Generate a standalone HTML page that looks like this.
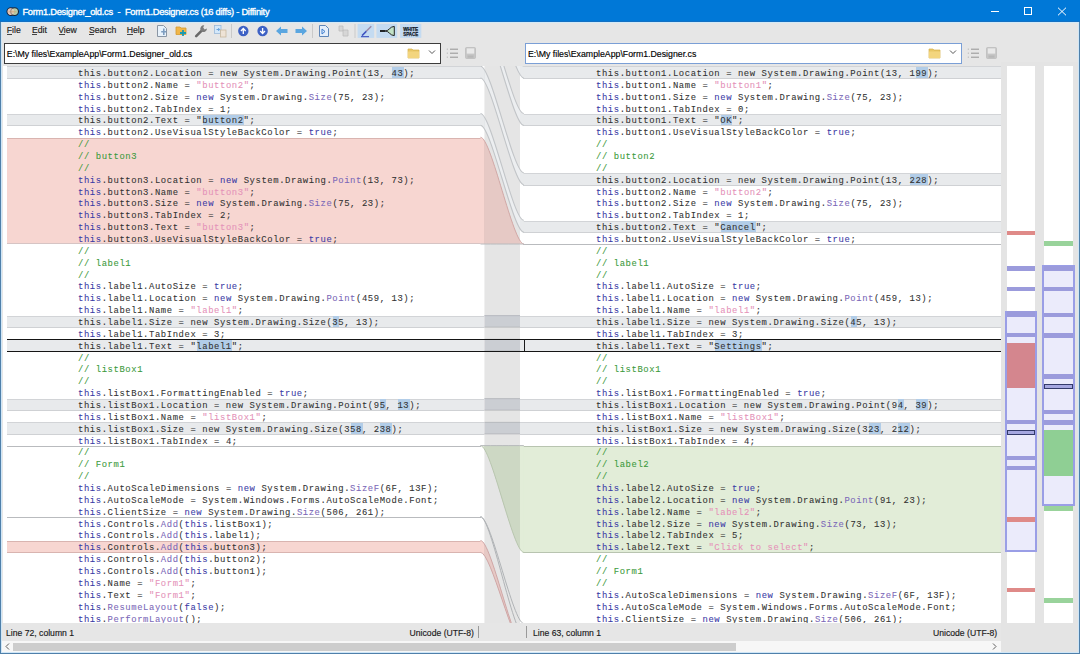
<!DOCTYPE html><html><head><meta charset="utf-8"><style>
*{margin:0;padding:0;box-sizing:border-box}
html,body{width:1080px;height:654px;overflow:hidden;background:#e6e6e6}
body{position:relative;font-family:"Liberation Sans",sans-serif}
.a{position:absolute}
.ln{position:absolute;font-family:"Liberation Mono",monospace;font-size:8.90px;line-height:11.86px;white-space:pre;color:#333333;letter-spacing:0.589px;-webkit-text-stroke:0.08px currentColor}
.band{position:absolute;background:#e8eaec;border-top:1px solid #d2d4d7;border-bottom:1px solid #cfd1d4}
.hl{position:absolute;background:#b2cde8}
.ui{position:absolute;font-family:"Liberation Sans",sans-serif;white-space:pre;-webkit-text-stroke:0.15px currentColor}
</style></head><body><div class="a" style="left:0;top:0;width:1080px;height:22.3px;background:#0078d7"></div><div class="a" style="left:0;top:21.4px;width:1080px;height:1px;background:#1570c2"></div><div class="a" style="left:0;top:22.4px;width:1080px;height:0.9px;background:#d2eaf8"></div><svg class="a" style="left:0;top:0" width="24" height="22" viewBox="0 0 24 22"><circle cx="10.9" cy="11.6" r="3.9" fill="#e6c2b4" stroke="#10223c" stroke-width="1.1"/><circle cx="14.6" cy="11.6" r="3.9" fill="#c9d6a6" fill-opacity="0.9" stroke="#10223c" stroke-width="1.1"/><circle cx="10.9" cy="11.6" r="3.4" fill="#e8c4b6" fill-opacity="0.6"/><path d="M8.5 11.8 h8" stroke="#c9a070" stroke-width="0.7"/></svg><div class="ui" style="left:22.40px;top:6.55px;font-size:9.30px;line-height:11.16px;color:#ffffff;letter-spacing:-0.27px;-webkit-text-stroke:0.35px #ffffff">Form1.Designer_old.cs  -  Form1.Designer.cs (16 diffs) - Diffinity</div><div class="a" style="left:990.5px;top:10.8px;width:8px;height:1px;background:#fff"></div><div class="a" style="left:1024px;top:7.3px;width:8px;height:7.4px;border:1px solid #fff"></div><svg class="a" style="left:1057px;top:6.5px" width="10" height="9" viewBox="0 0 10 9"><path d="M1 0.7 L9 8.3 M9 0.7 L1 8.3" stroke="#fff" stroke-width="1"/></svg><div class="ui" style="left:6.80px;top:24.80px;font-size:8.70px;line-height:10.44px;color:#202020;">File</div><div class="ui" style="left:31.90px;top:24.80px;font-size:8.70px;line-height:10.44px;color:#202020;">Edit</div><div class="ui" style="left:58.20px;top:24.80px;font-size:8.70px;line-height:10.44px;color:#202020;">View</div><div class="ui" style="left:88.90px;top:24.80px;font-size:8.70px;line-height:10.44px;color:#202020;">Search</div><div class="ui" style="left:126.70px;top:24.80px;font-size:8.70px;line-height:10.44px;color:#202020;">Help</div><div class="a" style="left:7px;top:34px;width:5px;height:0.8px;background:#444"></div><div class="a" style="left:32px;top:34px;width:5px;height:0.8px;background:#444"></div><div class="a" style="left:58.5px;top:34px;width:6px;height:0.8px;background:#444"></div><div class="a" style="left:89px;top:34px;width:5px;height:0.8px;background:#444"></div><div class="a" style="left:127px;top:34px;width:6px;height:0.8px;background:#444"></div><svg class="a" style="left:0;top:22px" width="440" height="20" viewBox="0 22 440 20"><path d="M157.5 25.5 h6 l3 3 v8 h-9 z" fill="#e8f2fb" stroke="#8a96a4" stroke-width="1"/><path d="M163.8 28.5 v6.5 M161.2 31.8 h5" fill="none" stroke="#7d9dc0" stroke-width="1.6"/><path d="M176 27 h4 l1 1 h5 v6.5 h-10 z" fill="#f0b64a" stroke="#d49a30" stroke-width="0.8"/><path d="M180 33 h6 M183 30 v6" stroke="#1a9ab0" stroke-width="1.8"/><path d="M196.2 36.2 L202.2 30.2" stroke="#6a6a6a" stroke-width="2.6" stroke-linecap="round"/><path d="M200.6 30.4 A3.6 3.6 0 0 1 204.3 25.3 L203.2 27.6 L204.6 29.4 L207 28.6 A3.6 3.6 0 0 1 202 31.8 Z" fill="#7c7c7c"/><rect x="214.5" y="25.5" width="6.5" height="8" fill="#d4e8fa" stroke="#9ab8da" stroke-width="0.8"/><path d="M216.5 29.5 h3 M218.2 28 l1.5 1.5 -1.5 1.5" fill="none" stroke="#5b9ad8" stroke-width="0.9"/><rect x="220.5" y="30" width="5.5" height="7" fill="#eee3d6" stroke="#c8b8a0" stroke-width="0.8"/><rect x="231" y="24" width="1" height="14" fill="#c9c9c9"/><rect x="312" y="24" width="1" height="14" fill="#c9c9c9"/><rect x="354.5" y="24" width="1" height="14" fill="#c9c9c9"/><circle cx="243.3" cy="31" r="5.2" fill="#3d61c4"/><path d="M243.3 34 v-5.2 M240.9 31 l2.4 -2.5 2.4 2.5" fill="none" stroke="#fff" stroke-width="1.3"/><circle cx="262.6" cy="31" r="5.2" fill="#3d61c4"/><path d="M262.6 28 v5.2 M260.2 31 l2.4 2.5 2.4 -2.5" fill="none" stroke="#fff" stroke-width="1.3"/><path d="M276 31 l5 -4.5 v2.5 h6.5 v4 h-6.5 v2.5 z" fill="#5aa6e0"/><path d="M307 31 l-5 -4.5 v2.5 h-6.5 v4 h6.5 v2.5 z" fill="#5aa6e0"/><path d="M319.5 25.5 h6 l3 3 v8 h-9 z" fill="#e4eefa" stroke="#5e86b8" stroke-width="1"/><path d="M322 29 v5 M322 29 l3 2.5 l-3 2.5" fill="none" stroke="#3f7fd0" stroke-width="1"/><path d="M339 26 h4 v5 h-4 z M343 30 h5 v6 h-5 z" fill="#d6d6d6" stroke="#bdbdbd" stroke-width="0.8"/><rect x="357.6" y="23.9" width="16.6" height="14" fill="#c4dbf1"/><rect x="376.4" y="23.9" width="20.8" height="14" fill="#c4dbf1"/><rect x="400.1" y="23.9" width="21.2" height="14" fill="#c4dbf1"/><path d="M362 35.6 L366.5 31.1" stroke="#3d52c0" stroke-width="1.5"/><path d="M366.3 31.3 L371.3 26.3" stroke="#9a8aa8" stroke-width="1.5"/><path d="M361 36.7 h8" stroke="#3344b8" stroke-width="1"/><path d="M385.5 31 C389 31 390 26.4 394.3 26.4 L394.3 35.6 C390 35.6 389 31 385.5 31 Z" fill="#c2e2c6" stroke="#222" stroke-width="1"/><path d="M380 31 h5.5" stroke="#111" stroke-width="1.8"/><text x="403.2" y="30.6" font-family="Liberation Sans" font-weight="bold" font-size="5.2" textLength="15" lengthAdjust="spacingAndGlyphs" fill="#101828" stroke="#101828" stroke-width="0.25">WHITE</text><text x="403.2" y="35.8" font-family="Liberation Sans" font-weight="bold" font-size="5.2" textLength="15" lengthAdjust="spacingAndGlyphs" fill="#101828" stroke="#101828" stroke-width="0.25">SPACE</text></svg><div class="a" style="left:3.80px;top:43px;width:436.90px;height:20.6px;background:#fff;border:1px solid #3c3c3c"></div><div class="ui" style="left:6.80px;top:49.06px;font-size:8.75px;line-height:10.50px;color:#000;">E:\My files\ExampleApp\Form1.Designer_old.cs</div><svg class="a" style="left:406.70px;top:47px" width="14" height="12" viewBox="0 0 14 12"><path d="M1 2 h4 l1 1 h6 v8 h-11 z" fill="#e9c766" stroke="#d7b24c" stroke-width="0.7"/><rect x="1" y="4.5" width="11" height="6.5" fill="#f3d57e"/></svg><svg class="a" style="left:427.70px;top:49px" width="8" height="6" viewBox="0 0 8 6"><path d="M1 1.5 L4 4.5 L7 1.5" fill="none" stroke="#444" stroke-width="0.9"/></svg><svg class="a" style="left:445.70px;top:47px" width="13" height="12" viewBox="0 0 13 12"><path d="M4 2.2 h8 M4 6.2 h8 M4 10.2 h8" stroke="#8a8a8a" stroke-width="0.9"/><path d="M1.3 1.5 v1.4 M1.3 5.5 v1.4 M1.3 9.5 v1.4" stroke="#b0b0b0" stroke-width="0.8"/></svg><svg class="a" style="left:465.20px;top:47px" width="11" height="12" viewBox="0 0 11 12"><rect x="0.5" y="0.5" width="10" height="11" rx="1" fill="#c6c6c6" stroke="#bdbdbd" stroke-width="0.8"/><rect x="1.8" y="1.4" width="7.4" height="5.2" fill="#e9e9e9"/><rect x="2.5" y="8.5" width="6" height="2.2" fill="#b8b8b8"/></svg><div class="a" style="left:525.00px;top:43px;width:436.60px;height:20.6px;background:#fff;border:1px solid #7a9fd6"></div><div class="ui" style="left:528.00px;top:49.06px;font-size:8.75px;line-height:10.50px;color:#000;">E:\My files\ExampleApp\Form1.Designer.cs</div><svg class="a" style="left:927.60px;top:47px" width="14" height="12" viewBox="0 0 14 12"><path d="M1 2 h4 l1 1 h6 v8 h-11 z" fill="#e9c766" stroke="#d7b24c" stroke-width="0.7"/><rect x="1" y="4.5" width="11" height="6.5" fill="#f3d57e"/></svg><svg class="a" style="left:948.60px;top:49px" width="8" height="6" viewBox="0 0 8 6"><path d="M1 1.5 L4 4.5 L7 1.5" fill="none" stroke="#444" stroke-width="0.9"/></svg><svg class="a" style="left:966.60px;top:47px" width="13" height="12" viewBox="0 0 13 12"><path d="M4 2.2 h8 M4 6.2 h8 M4 10.2 h8" stroke="#8a8a8a" stroke-width="0.9"/><path d="M1.3 1.5 v1.4 M1.3 5.5 v1.4 M1.3 9.5 v1.4" stroke="#b0b0b0" stroke-width="0.8"/></svg><svg class="a" style="left:986.10px;top:47px" width="11" height="12" viewBox="0 0 11 12"><rect x="0.5" y="0.5" width="10" height="11" rx="1" fill="#c6c6c6" stroke="#bdbdbd" stroke-width="0.8"/><rect x="1.8" y="1.4" width="7.4" height="5.2" fill="#e9e9e9"/><rect x="2.5" y="8.5" width="6" height="2.2" fill="#b8b8b8"/></svg><div class="a" style="left:0;top:66.40px;width:1080px;height:556.90px;overflow:hidden"><div class="a" style="left:3.00px;top:0;width:998.00px;height:100%;background:#fff"></div><div class="a" style="left:7.00px;top:71.26px;width:474.00px;height:106.74px;background:#f7d6d1;border-top:1px solid #d9b4b0;border-bottom:1px solid #d6c4c4"></div><div class="a" style="left:7.00px;top:474.50px;width:474.00px;height:11.86px;background:#f7d6d1;border-top:1px solid #d9b4b0;border-bottom:1px solid #d9b4b0"></div><div class="a" style="left:523.30px;top:379.62px;width:477.70px;height:106.74px;background:#e2edd8;border-top:1px solid #b8c4b0;border-bottom:1px solid #b8c4b0"></div><div class="a" style="left:7.00px;top:379.12px;width:474.00px;height:1.00px;background:#b9bbbe"></div><div class="a" style="left:7.00px;top:450.28px;width:474.00px;height:1.00px;background:#b9bbbe"></div><div class="a" style="left:523.30px;top:177.50px;width:477.70px;height:1.00px;background:#b9bbbe"></div><div class="band" style="left:7.00px;top:0.10px;width:474.00px;height:12.46px"></div><div class="band" style="left:7.00px;top:47.54px;width:474.00px;height:12.46px"></div><div class="band" style="left:7.00px;top:249.16px;width:513.00px;height:12.46px"></div><div class="band" style="left:7.00px;top:272.88px;width:513.00px;height:12.46px"></div><div class="band" style="left:7.00px;top:332.18px;width:513.00px;height:12.46px"></div><div class="band" style="left:7.00px;top:355.90px;width:513.00px;height:12.46px"></div><div class="band" style="left:523.30px;top:0.10px;width:477.70px;height:12.46px"></div><div class="band" style="left:523.30px;top:47.54px;width:477.70px;height:12.46px"></div><div class="band" style="left:523.30px;top:106.84px;width:477.70px;height:12.46px"></div><div class="band" style="left:523.30px;top:154.28px;width:477.70px;height:12.46px"></div><div class="band" style="left:484.40px;top:249.16px;width:516.60px;height:12.46px"></div><div class="band" style="left:484.40px;top:272.88px;width:516.60px;height:12.46px"></div><div class="band" style="left:484.40px;top:332.18px;width:516.60px;height:12.46px"></div><div class="band" style="left:484.40px;top:355.90px;width:516.60px;height:12.46px"></div><svg class="a" style="left:0;top:0" width="1080" height="557" viewBox="0 66.40 1080 557"><rect x="484.40" y="0" width="35.60" height="700" fill="#ffffff"/><clipPath id="strip"><rect x="484.40" y="0" width="35.60" height="700"/></clipPath><rect x="484.40" y="315.56" width="35.60" height="11.86" fill="#e8eaec"/><rect x="484.40" y="315.56" width="35.60" height="1" fill="#d2d4d7"/><rect x="484.40" y="327.02" width="35.60" height="1" fill="#cfd1d4"/><rect x="484.40" y="339.28" width="35.60" height="11.86" fill="#e8eaec"/><rect x="484.40" y="339.28" width="35.60" height="1" fill="#d2d4d7"/><rect x="484.40" y="350.74" width="35.60" height="1" fill="#cfd1d4"/><rect x="484.40" y="398.58" width="35.60" height="11.86" fill="#e8eaec"/><rect x="484.40" y="398.58" width="35.60" height="1" fill="#d2d4d7"/><rect x="484.40" y="410.04" width="35.60" height="1" fill="#cfd1d4"/><rect x="484.40" y="422.30" width="35.60" height="11.86" fill="#e8eaec"/><rect x="484.40" y="422.30" width="35.60" height="1" fill="#d2d4d7"/><rect x="484.40" y="433.76" width="35.60" height="1" fill="#cfd1d4"/><path d="M480.50,-40.24 C491.32,-40.24 512.97,66.50 523.80,66.50 L523.80,78.36 C512.97,78.36 491.32,-28.38 480.50,-28.38 Z" fill="#e8eaec" stroke="none"/><path d="M480.50,7.20 C491.32,7.20 512.97,113.94 523.80,113.94 L523.80,125.80 C512.97,125.80 491.32,19.06 480.50,19.06 Z" fill="#e8eaec" stroke="none"/><path d="M480.50,66.50 C491.32,66.50 512.97,173.24 523.80,173.24 L523.80,185.10 C512.97,185.10 491.32,78.36 480.50,78.36 Z" fill="#e8eaec" stroke="none"/><path d="M480.50,113.94 C491.32,113.94 512.97,220.68 523.80,220.68 L523.80,232.54 C512.97,232.54 491.32,125.80 480.50,125.80 Z" fill="#e8eaec" stroke="none"/><path d="M480.50,137.66 C491.32,137.66 512.97,244.40 523.80,244.40 L523.80,244.40 C512.97,244.40 491.32,244.40 480.50,244.40 Z" fill="#f7d6d1" stroke="none"/><path d="M480.50,540.90 C491.32,540.90 512.97,647.64 523.80,647.64 L523.80,647.64 C512.97,647.64 491.32,552.76 480.50,552.76 Z" fill="#f7d6d1" stroke="none"/><path d="M480.50,446.02 C491.32,446.02 512.97,446.02 523.80,446.02 L523.80,552.76 C512.97,552.76 491.32,446.02 480.50,446.02 Z" fill="#e2edd8" stroke="none"/><rect x="484.40" y="0" width="35.60" height="700" fill="#000" fill-opacity="0.1"/><rect x="484.40" y="315.56" width="35.60" height="11.86" fill="#4060b0" fill-opacity="0.03"/><rect x="484.40" y="339.28" width="35.60" height="11.86" fill="#4060b0" fill-opacity="0.03"/><rect x="484.40" y="398.58" width="35.60" height="11.86" fill="#4060b0" fill-opacity="0.03"/><rect x="484.40" y="422.30" width="35.60" height="11.86" fill="#4060b0" fill-opacity="0.03"/><path d="M480.50,-40.24 C491.32,-40.24 512.97,66.50 523.80,66.50 L523.80,78.36 C512.97,78.36 491.32,-28.38 480.50,-28.38 Z" fill="#eceef0" stroke="none" clip-path="url(#strip)"/><path d="M480.50,7.20 C491.32,7.20 512.97,113.94 523.80,113.94 L523.80,125.80 C512.97,125.80 491.32,19.06 480.50,19.06 Z" fill="#eceef0" stroke="none" clip-path="url(#strip)"/><path d="M480.50,66.50 C491.32,66.50 512.97,173.24 523.80,173.24 L523.80,185.10 C512.97,185.10 491.32,78.36 480.50,78.36 Z" fill="#eceef0" stroke="none" clip-path="url(#strip)"/><path d="M480.50,113.94 C491.32,113.94 512.97,220.68 523.80,220.68 L523.80,232.54 C512.97,232.54 491.32,125.80 480.50,125.80 Z" fill="#eceef0" stroke="none" clip-path="url(#strip)"/><path d="M480.50,137.66 C491.32,137.66 512.97,244.40 523.80,244.40 L523.80,244.40 C512.97,244.40 491.32,244.40 480.50,244.40 Z" fill="#e6c9c5" stroke="none" clip-path="url(#strip)"/><path d="M480.50,540.90 C491.32,540.90 512.97,647.64 523.80,647.64 L523.80,647.64 C512.97,647.64 491.32,552.76 480.50,552.76 Z" fill="#e6c9c5" stroke="none" clip-path="url(#strip)"/><path d="M480.50,446.02 C491.32,446.02 512.97,446.02 523.80,446.02 L523.80,552.76 C512.97,552.76 491.32,446.02 480.50,446.02 Z" fill="#cdd8c4" stroke="none" clip-path="url(#strip)"/><path d="M480.50,-40.24 C491.32,-40.24 512.97,66.50 523.80,66.50" fill="none" stroke="#c2c5c8" stroke-width="1.1"/><path d="M480.50,-28.38 C491.32,-28.38 512.97,78.36 523.80,78.36" fill="none" stroke="#c2c5c8" stroke-width="1.1"/><path d="M480.50,7.20 C491.32,7.20 512.97,113.94 523.80,113.94" fill="none" stroke="#c2c5c8" stroke-width="1.1"/><path d="M480.50,19.06 C491.32,19.06 512.97,125.80 523.80,125.80" fill="none" stroke="#c2c5c8" stroke-width="1.1"/><path d="M480.50,66.50 C491.32,66.50 512.97,173.24 523.80,173.24" fill="none" stroke="#c2c5c8" stroke-width="1.1"/><path d="M480.50,78.36 C491.32,78.36 512.97,185.10 523.80,185.10" fill="none" stroke="#c2c5c8" stroke-width="1.1"/><path d="M480.50,113.94 C491.32,113.94 512.97,220.68 523.80,220.68" fill="none" stroke="#c2c5c8" stroke-width="1.1"/><path d="M480.50,125.80 C491.32,125.80 512.97,232.54 523.80,232.54" fill="none" stroke="#c2c5c8" stroke-width="1.1"/><path d="M480.50,137.66 C491.32,137.66 512.97,244.40 523.80,244.40 L523.80,244.40 C512.97,244.40 491.32,244.40 480.50,244.40 Z" fill="#e6c9c5" stroke="none" clip-path="url(#strip)"/><path d="M480.50,137.66 C491.32,137.66 512.97,244.40 523.80,244.40" fill="none" stroke="#d2aaa8" stroke-width="1"/><path d="M480.50,244.40 C491.32,244.40 512.97,244.40 523.80,244.40" fill="none" stroke="#b8babd" stroke-width="1"/><path d="M480.50,517.18 C491.32,517.18 512.97,623.92 523.80,623.92" fill="none" stroke="#b0b3b6" stroke-width="1"/><path d="M480.50,517.18 C491.32,517.18 512.97,635.78 523.80,635.78" fill="none" stroke="#b0b3b6" stroke-width="1"/><path d="M480.50,540.90 C491.32,540.90 512.97,647.64 523.80,647.64" fill="none" stroke="#d0a8a8" stroke-width="1"/><path d="M480.50,552.76 C491.32,552.76 512.97,647.64 523.80,647.64" fill="none" stroke="#d0a8a8" stroke-width="1"/><path d="M480.50,446.02 C491.32,446.02 512.97,552.76 523.80,552.76" fill="none" stroke="#b9c6b0" stroke-width="1"/><path d="M480.50,446.02 C491.32,446.02 512.97,446.02 523.80,446.02" fill="none" stroke="#b8babd" stroke-width="1"/></svg><div class="a" style="left:7px;top:272.28px;width:994.00px;height:1.6px;background:#151515"></div><div class="a" style="left:7px;top:284.14px;width:994.00px;height:1.6px;background:#151515"></div><div class="a" style="left:524.2px;top:272.88px;width:1.2px;height:11.86px;background:#1a1a1a"></div><div class="hl" style="left:392.29px;top:0.80px;width:11.86px;height:10.76px"></div><div class="ln" style="left:78.00px;top:2.55px">this.button2.Location = new System.Drawing.Point(13, 43);</div><div class="ln" style="left:78.00px;top:14.41px"><span style="color:#3b3ba6">this</span>.button2.Name = <span style="color:#e592b9">&quot;button2&quot;</span>;</div><div class="ln" style="left:78.00px;top:26.27px"><span style="color:#3b3ba6">this</span>.button2.Size = <span style="color:#3b3ba6">new</span> System.Drawing.<span style="color:#7b68b8">Size</span>(75, 23);</div><div class="ln" style="left:78.00px;top:38.13px"><span style="color:#3b3ba6">this</span>.button2.TabIndex = 1;</div><div class="hl" style="left:202.53px;top:48.24px;width:41.51px;height:10.76px"></div><div class="ln" style="left:78.00px;top:49.99px">this.button2.Text = &quot;button2&quot;;</div><div class="ln" style="left:78.00px;top:61.85px"><span style="color:#3b3ba6">this</span>.button2.UseVisualStyleBackColor = <span style="color:#3b3ba6">true</span>;</div><div class="ln" style="left:78.00px;top:73.71px"><span style="color:#3c9a3c">//</span></div><div class="ln" style="left:78.00px;top:85.57px"><span style="color:#3c9a3c">// button3</span></div><div class="ln" style="left:78.00px;top:97.43px"><span style="color:#3c9a3c">//</span></div><div class="ln" style="left:78.00px;top:109.29px"><span style="color:#3b3ba6">this</span>.button3.Location = <span style="color:#3b3ba6">new</span> System.Drawing.<span style="color:#7b68b8">Point</span>(13, 73);</div><div class="ln" style="left:78.00px;top:121.15px"><span style="color:#3b3ba6">this</span>.button3.Name = <span style="color:#e592b9">&quot;button3&quot;</span>;</div><div class="ln" style="left:78.00px;top:133.01px"><span style="color:#3b3ba6">this</span>.button3.Size = <span style="color:#3b3ba6">new</span> System.Drawing.<span style="color:#7b68b8">Size</span>(75, 23);</div><div class="ln" style="left:78.00px;top:144.87px"><span style="color:#3b3ba6">this</span>.button3.TabIndex = 2;</div><div class="ln" style="left:78.00px;top:156.73px"><span style="color:#3b3ba6">this</span>.button3.Text = <span style="color:#e592b9">&quot;button3&quot;</span>;</div><div class="ln" style="left:78.00px;top:168.59px"><span style="color:#3b3ba6">this</span>.button3.UseVisualStyleBackColor = <span style="color:#3b3ba6">true</span>;</div><div class="ln" style="left:78.00px;top:180.45px"><span style="color:#3c9a3c">//</span></div><div class="ln" style="left:78.00px;top:192.31px"><span style="color:#3c9a3c">// label1</span></div><div class="ln" style="left:78.00px;top:204.17px"><span style="color:#3c9a3c">//</span></div><div class="ln" style="left:78.00px;top:216.03px"><span style="color:#3b3ba6">this</span>.label1.AutoSize = <span style="color:#3b3ba6">true</span>;</div><div class="ln" style="left:78.00px;top:227.89px"><span style="color:#3b3ba6">this</span>.label1.Location = <span style="color:#3b3ba6">new</span> System.Drawing.<span style="color:#7b68b8">Point</span>(459, 13);</div><div class="ln" style="left:78.00px;top:239.75px"><span style="color:#3b3ba6">this</span>.label1.Name = <span style="color:#e592b9">&quot;label1&quot;</span>;</div><div class="hl" style="left:332.99px;top:249.86px;width:5.93px;height:10.76px"></div><div class="ln" style="left:78.00px;top:251.61px">this.label1.Size = new System.Drawing.Size(35, 13);</div><div class="ln" style="left:78.00px;top:263.47px"><span style="color:#3b3ba6">this</span>.label1.TabIndex = 3;</div><div class="hl" style="left:196.60px;top:273.58px;width:35.58px;height:10.76px"></div><div class="ln" style="left:78.00px;top:275.33px">this.label1.Text = &quot;label1&quot;;</div><div class="ln" style="left:78.00px;top:287.19px"><span style="color:#3c9a3c">//</span></div><div class="ln" style="left:78.00px;top:299.05px"><span style="color:#3c9a3c">// listBox1</span></div><div class="ln" style="left:78.00px;top:310.91px"><span style="color:#3c9a3c">//</span></div><div class="ln" style="left:78.00px;top:322.77px"><span style="color:#3b3ba6">this</span>.listBox1.FormattingEnabled = <span style="color:#3b3ba6">true</span>;</div><div class="hl" style="left:380.43px;top:332.88px;width:5.93px;height:10.76px"></div><div class="hl" style="left:398.22px;top:332.88px;width:11.86px;height:10.76px"></div><div class="ln" style="left:78.00px;top:334.63px">this.listBox1.Location = new System.Drawing.Point(95, 13);</div><div class="ln" style="left:78.00px;top:346.49px"><span style="color:#3b3ba6">this</span>.listBox1.Name = <span style="color:#e592b9">&quot;listBox1&quot;</span>;</div><div class="hl" style="left:350.78px;top:356.60px;width:11.86px;height:10.76px"></div><div class="hl" style="left:380.43px;top:356.60px;width:11.86px;height:10.76px"></div><div class="ln" style="left:78.00px;top:358.35px">this.listBox1.Size = new System.Drawing.Size(358, 238);</div><div class="ln" style="left:78.00px;top:370.21px"><span style="color:#3b3ba6">this</span>.listBox1.TabIndex = 4;</div><div class="ln" style="left:78.00px;top:382.07px"><span style="color:#3c9a3c">//</span></div><div class="ln" style="left:78.00px;top:393.93px"><span style="color:#3c9a3c">// Form1</span></div><div class="ln" style="left:78.00px;top:405.79px"><span style="color:#3c9a3c">//</span></div><div class="ln" style="left:78.00px;top:417.65px"><span style="color:#3b3ba6">this</span>.AutoScaleDimensions = <span style="color:#3b3ba6">new</span> System.Drawing.<span style="color:#7b68b8">SizeF</span>(6F, 13F);</div><div class="ln" style="left:78.00px;top:429.51px"><span style="color:#3b3ba6">this</span>.AutoScaleMode = System.Windows.Forms.AutoScaleMode.Font;</div><div class="ln" style="left:78.00px;top:441.37px"><span style="color:#3b3ba6">this</span>.ClientSize = <span style="color:#3b3ba6">new</span> System.Drawing.<span style="color:#7b68b8">Size</span>(506, 261);</div><div class="ln" style="left:78.00px;top:453.23px"><span style="color:#3b3ba6">this</span>.Controls.<span style="color:#7b68b8">Add</span>(<span style="color:#3b3ba6">this</span>.listBox1);</div><div class="ln" style="left:78.00px;top:465.09px"><span style="color:#3b3ba6">this</span>.Controls.<span style="color:#7b68b8">Add</span>(<span style="color:#3b3ba6">this</span>.label1);</div><div class="ln" style="left:78.00px;top:476.95px"><span style="color:#3b3ba6">this</span>.Controls.<span style="color:#7b68b8">Add</span>(<span style="color:#3b3ba6">this</span>.button3);</div><div class="ln" style="left:78.00px;top:488.81px"><span style="color:#3b3ba6">this</span>.Controls.<span style="color:#7b68b8">Add</span>(<span style="color:#3b3ba6">this</span>.button2);</div><div class="ln" style="left:78.00px;top:500.67px"><span style="color:#3b3ba6">this</span>.Controls.<span style="color:#7b68b8">Add</span>(<span style="color:#3b3ba6">this</span>.button1);</div><div class="ln" style="left:78.00px;top:512.53px"><span style="color:#3b3ba6">this</span>.Name = <span style="color:#e592b9">&quot;Form1&quot;</span>;</div><div class="ln" style="left:78.00px;top:524.39px"><span style="color:#3b3ba6">this</span>.Text = <span style="color:#e592b9">&quot;Form1&quot;</span>;</div><div class="ln" style="left:78.00px;top:536.25px"><span style="color:#3b3ba6">this</span>.<span style="color:#7b68b8">ResumeLayout</span>(<span style="color:#3b3ba6">false</span>);</div><div class="ln" style="left:78.00px;top:548.11px"><span style="color:#3b3ba6">this</span>.<span style="color:#7b68b8">PerformLayout</span>();</div><div class="hl" style="left:916.22px;top:0.80px;width:11.86px;height:10.76px"></div><div class="ln" style="left:596.00px;top:2.55px">this.button1.Location = new System.Drawing.Point(13, 199);</div><div class="ln" style="left:596.00px;top:14.41px"><span style="color:#3b3ba6">this</span>.button1.Name = <span style="color:#e592b9">&quot;button1&quot;</span>;</div><div class="ln" style="left:596.00px;top:26.27px"><span style="color:#3b3ba6">this</span>.button1.Size = <span style="color:#3b3ba6">new</span> System.Drawing.<span style="color:#7b68b8">Size</span>(75, 23);</div><div class="ln" style="left:596.00px;top:38.13px"><span style="color:#3b3ba6">this</span>.button1.TabIndex = 0;</div><div class="hl" style="left:720.53px;top:48.24px;width:11.86px;height:10.76px"></div><div class="ln" style="left:596.00px;top:49.99px">this.button1.Text = &quot;OK&quot;;</div><div class="ln" style="left:596.00px;top:61.85px"><span style="color:#3b3ba6">this</span>.button1.UseVisualStyleBackColor = <span style="color:#3b3ba6">true</span>;</div><div class="ln" style="left:596.00px;top:73.71px"><span style="color:#3c9a3c">//</span></div><div class="ln" style="left:596.00px;top:85.57px"><span style="color:#3c9a3c">// button2</span></div><div class="ln" style="left:596.00px;top:97.43px"><span style="color:#3c9a3c">//</span></div><div class="hl" style="left:910.29px;top:107.54px;width:17.79px;height:10.76px"></div><div class="ln" style="left:596.00px;top:109.29px">this.button2.Location = new System.Drawing.Point(13, 228);</div><div class="ln" style="left:596.00px;top:121.15px"><span style="color:#3b3ba6">this</span>.button2.Name = <span style="color:#e592b9">&quot;button2&quot;</span>;</div><div class="ln" style="left:596.00px;top:133.01px"><span style="color:#3b3ba6">this</span>.button2.Size = <span style="color:#3b3ba6">new</span> System.Drawing.<span style="color:#7b68b8">Size</span>(75, 23);</div><div class="ln" style="left:596.00px;top:144.87px"><span style="color:#3b3ba6">this</span>.button2.TabIndex = 1;</div><div class="hl" style="left:720.53px;top:154.98px;width:35.58px;height:10.76px"></div><div class="ln" style="left:596.00px;top:156.73px">this.button2.Text = &quot;Cancel&quot;;</div><div class="ln" style="left:596.00px;top:168.59px"><span style="color:#3b3ba6">this</span>.button2.UseVisualStyleBackColor = <span style="color:#3b3ba6">true</span>;</div><div class="ln" style="left:596.00px;top:180.45px"><span style="color:#3c9a3c">//</span></div><div class="ln" style="left:596.00px;top:192.31px"><span style="color:#3c9a3c">// label1</span></div><div class="ln" style="left:596.00px;top:204.17px"><span style="color:#3c9a3c">//</span></div><div class="ln" style="left:596.00px;top:216.03px"><span style="color:#3b3ba6">this</span>.label1.AutoSize = <span style="color:#3b3ba6">true</span>;</div><div class="ln" style="left:596.00px;top:227.89px"><span style="color:#3b3ba6">this</span>.label1.Location = <span style="color:#3b3ba6">new</span> System.Drawing.<span style="color:#7b68b8">Point</span>(459, 13);</div><div class="ln" style="left:596.00px;top:239.75px"><span style="color:#3b3ba6">this</span>.label1.Name = <span style="color:#e592b9">&quot;label1&quot;</span>;</div><div class="hl" style="left:850.99px;top:249.86px;width:5.93px;height:10.76px"></div><div class="ln" style="left:596.00px;top:251.61px">this.label1.Size = new System.Drawing.Size(45, 13);</div><div class="ln" style="left:596.00px;top:263.47px"><span style="color:#3b3ba6">this</span>.label1.TabIndex = 3;</div><div class="hl" style="left:714.60px;top:273.58px;width:47.44px;height:10.76px"></div><div class="ln" style="left:596.00px;top:275.33px">this.label1.Text = &quot;Settings&quot;;</div><div class="ln" style="left:596.00px;top:287.19px"><span style="color:#3c9a3c">//</span></div><div class="ln" style="left:596.00px;top:299.05px"><span style="color:#3c9a3c">// listBox1</span></div><div class="ln" style="left:596.00px;top:310.91px"><span style="color:#3c9a3c">//</span></div><div class="ln" style="left:596.00px;top:322.77px"><span style="color:#3b3ba6">this</span>.listBox1.FormattingEnabled = <span style="color:#3b3ba6">true</span>;</div><div class="hl" style="left:898.43px;top:332.88px;width:5.93px;height:10.76px"></div><div class="hl" style="left:916.22px;top:332.88px;width:11.86px;height:10.76px"></div><div class="ln" style="left:596.00px;top:334.63px">this.listBox1.Location = new System.Drawing.Point(94, 39);</div><div class="ln" style="left:596.00px;top:346.49px"><span style="color:#3b3ba6">this</span>.listBox1.Name = <span style="color:#e592b9">&quot;listBox1&quot;</span>;</div><div class="hl" style="left:868.78px;top:356.60px;width:11.86px;height:10.76px"></div><div class="hl" style="left:898.43px;top:356.60px;width:11.86px;height:10.76px"></div><div class="ln" style="left:596.00px;top:358.35px">this.listBox1.Size = new System.Drawing.Size(323, 212);</div><div class="ln" style="left:596.00px;top:370.21px"><span style="color:#3b3ba6">this</span>.listBox1.TabIndex = 4;</div><div class="ln" style="left:596.00px;top:382.07px"><span style="color:#3c9a3c">//</span></div><div class="ln" style="left:596.00px;top:393.93px"><span style="color:#3c9a3c">// label2</span></div><div class="ln" style="left:596.00px;top:405.79px"><span style="color:#3c9a3c">//</span></div><div class="ln" style="left:596.00px;top:417.65px"><span style="color:#3b3ba6">this</span>.label2.AutoSize = <span style="color:#3b3ba6">true</span>;</div><div class="ln" style="left:596.00px;top:429.51px"><span style="color:#3b3ba6">this</span>.label2.Location = <span style="color:#3b3ba6">new</span> System.Drawing.<span style="color:#7b68b8">Point</span>(91, 23);</div><div class="ln" style="left:596.00px;top:441.37px"><span style="color:#3b3ba6">this</span>.label2.Name = <span style="color:#e592b9">&quot;label2&quot;</span>;</div><div class="ln" style="left:596.00px;top:453.23px"><span style="color:#3b3ba6">this</span>.label2.Size = <span style="color:#3b3ba6">new</span> System.Drawing.<span style="color:#7b68b8">Size</span>(73, 13);</div><div class="ln" style="left:596.00px;top:465.09px"><span style="color:#3b3ba6">this</span>.label2.TabIndex = 5;</div><div class="ln" style="left:596.00px;top:476.95px"><span style="color:#3b3ba6">this</span>.label2.Text = <span style="color:#e592b9">&quot;Click to select&quot;</span>;</div><div class="ln" style="left:596.00px;top:488.81px"><span style="color:#3c9a3c">//</span></div><div class="ln" style="left:596.00px;top:500.67px"><span style="color:#3c9a3c">// Form1</span></div><div class="ln" style="left:596.00px;top:512.53px"><span style="color:#3c9a3c">//</span></div><div class="ln" style="left:596.00px;top:524.39px"><span style="color:#3b3ba6">this</span>.AutoScaleDimensions = <span style="color:#3b3ba6">new</span> System.Drawing.<span style="color:#7b68b8">SizeF</span>(6F, 13F);</div><div class="ln" style="left:596.00px;top:536.25px"><span style="color:#3b3ba6">this</span>.AutoScaleMode = System.Windows.Forms.AutoScaleMode.Font;</div><div class="ln" style="left:596.00px;top:548.11px"><span style="color:#3b3ba6">this</span>.ClientSize = <span style="color:#3b3ba6">new</span> System.Drawing.<span style="color:#7b68b8">Size</span>(506, 261);</div></div><div class="a" style="left:1001.00px;top:62.00px;width:77.00px;height:590.00px;background:#e4e4e4"></div><div class="a" style="left:1007.00px;top:66.40px;width:28.30px;height:557.10px;background:#fff"></div><div class="a" style="left:1044.20px;top:66.40px;width:28.50px;height:557.10px;background:#fff"></div><div class="a" style="left:1005.30px;top:311.30px;width:31.90px;height:240.90px;background:#ebebfb;border:2px solid #9a9ee6"></div><div class="a" style="left:1042.30px;top:265.30px;width:32.30px;height:240.90px;background:#ebebfb;border:2px solid #9a9ee6"></div><div class="a" style="left:1007.00px;top:266.40px;width:28.30px;height:4.30px;background:#9b9bdc"></div><div class="a" style="left:1007.00px;top:286.70px;width:28.30px;height:4.30px;background:#9b9bdc"></div><div class="a" style="left:1007.00px;top:311.30px;width:28.30px;height:5.70px;background:#9b9bdc"></div><div class="a" style="left:1007.00px;top:332.80px;width:28.30px;height:4.50px;background:#9b9bdc"></div><div class="a" style="left:1007.00px;top:420.00px;width:28.30px;height:4.20px;background:#9b9bdc"></div><div class="a" style="left:1007.00px;top:455.70px;width:28.30px;height:4.30px;background:#9b9bdc"></div><div class="a" style="left:1007.00px;top:465.70px;width:28.30px;height:4.70px;background:#9b9bdc"></div><div class="a" style="left:1007.00px;top:343.30px;width:28.30px;height:44.90px;background:#d4868e"></div><div class="a" style="left:1007.00px;top:230.60px;width:28.30px;height:4.70px;background:#df8a88"></div><div class="a" style="left:1007.00px;top:516.60px;width:28.30px;height:5.20px;background:#df8a88"></div><div class="a" style="left:1007.00px;top:587.80px;width:28.30px;height:4.70px;background:#df8a88"></div><div class="a" style="left:1007.00px;top:430.00px;width:28.30px;height:5.00px;background:#a5a7e0;border:1px solid #333a6a"></div><div class="a" style="left:1044.20px;top:266.00px;width:28.50px;height:5.00px;background:#9b9bdc"></div><div class="a" style="left:1044.20px;top:287.00px;width:28.50px;height:4.20px;background:#9b9bdc"></div><div class="a" style="left:1044.20px;top:313.00px;width:28.50px;height:4.20px;background:#9b9bdc"></div><div class="a" style="left:1044.20px;top:333.00px;width:28.50px;height:4.50px;background:#9b9bdc"></div><div class="a" style="left:1044.20px;top:373.90px;width:28.50px;height:4.90px;background:#9b9bdc"></div><div class="a" style="left:1044.20px;top:409.70px;width:28.50px;height:4.50px;background:#9b9bdc"></div><div class="a" style="left:1044.20px;top:420.00px;width:28.50px;height:4.50px;background:#9b9bdc"></div><div class="a" style="left:1044.20px;top:384.20px;width:28.50px;height:4.80px;background:#a5a7e0;border:1px solid #333a6a"></div><div class="a" style="left:1044.20px;top:429.60px;width:28.50px;height:46.00px;background:#8fcf94"></div><div class="a" style="left:1044.20px;top:241.30px;width:28.50px;height:4.70px;background:#99d39b"></div><div class="a" style="left:1044.20px;top:506.20px;width:28.50px;height:4.40px;background:#99d39b"></div><div class="a" style="left:1044.20px;top:598.40px;width:28.50px;height:4.50px;background:#99d39b"></div><div class="ui" style="left:6.00px;top:628.15px;font-size:8.65px;line-height:10.38px;color:#1a1a1a;">Line 72, column 1</div><div class="ui" style="left:409.60px;top:628.15px;font-size:8.65px;line-height:10.38px;color:#1a1a1a;">Unicode (UTF-8)</div><div class="a" style="left:477.6px;top:626px;width:1px;height:12px;background:#9a9a9a"></div><div class="a" style="left:525.8px;top:626px;width:1px;height:12px;background:#9a9a9a"></div><div class="ui" style="left:533.00px;top:628.15px;font-size:8.65px;line-height:10.38px;color:#1a1a1a;">Line 63, column 1</div><div class="ui" style="left:933.00px;top:628.15px;font-size:8.65px;line-height:10.38px;color:#1a1a1a;">Unicode (UTF-8)</div><div class="a" style="left:1px;top:641px;width:1000px;height:11px;background:#f7f7f7"></div><div class="a" style="left:13px;top:643px;width:723px;height:7.6px;background:#cdcdcd"></div><svg class="a" style="left:4px;top:642px" width="8" height="9" viewBox="0 0 8 9"><path d="M5 1.5 L2 4.5 L5 7.5" fill="none" stroke="#606060" stroke-width="1"/></svg><svg class="a" style="left:990px;top:642px" width="8" height="9" viewBox="0 0 8 9"><path d="M3 1.5 L6 4.5 L3 7.5" fill="none" stroke="#606060" stroke-width="1"/></svg><div class="a" style="left:0;top:22px;width:1px;height:632px;background:#4f80aa"></div><div class="a" style="left:1px;top:22px;width:1px;height:631px;background:#cfe6f7"></div><div class="a" style="left:1078px;top:22px;width:1px;height:631px;background:#cfe6f7"></div><div class="a" style="left:1079px;top:22px;width:1px;height:632px;background:#4f80aa"></div><div class="a" style="left:1px;top:652px;width:1078px;height:1px;background:#cfe6f7"></div><div class="a" style="left:0;top:653px;width:1080px;height:1px;background:#4f80aa"></div></body></html>
